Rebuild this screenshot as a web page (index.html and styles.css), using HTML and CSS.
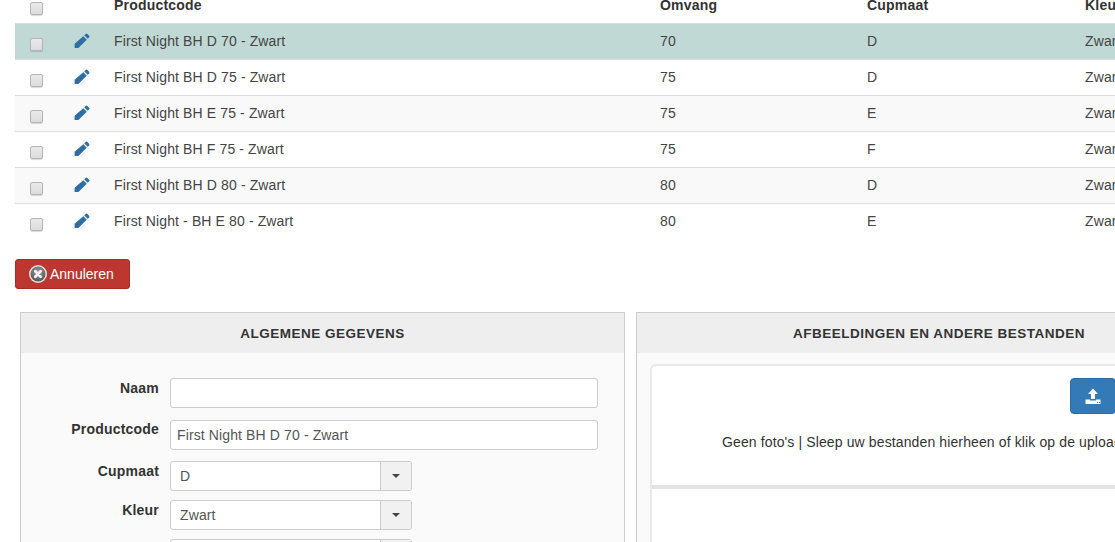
FILE: index.html
```html
<!DOCTYPE html>
<html lang="nl">
<head>
<meta charset="utf-8">
<title>Producten</title>
<link rel="stylesheet" href="styles.css">
</head>
<body>
<svg class="sprite" width="0" height="0" aria-hidden="true">
  <symbol id="pencil" viewBox="0 0 16 16"><path d="M11.6.9a1.2 1.2 0 0 1 1.7 0l1.8 1.8a1.2 1.2 0 0 1 0 1.7l-1.4 1.4-3.5-3.5zM9.3 3.2l3.5 3.5-7.9 7.9c-.2.2-.4.3-.6.3H.6v-3.7c0-.2.1-.4.3-.6z"/></symbol>
</svg>
<div class="page">
  <div class="grid-table">
    <div class="row head">
      <span class="cell-check"><span class="check"></span></span><span></span>
      <span>Productcode</span><span>Omvang</span><span>Cupmaat</span><span>Kleur</span>
    </div>
    <div class="row selected">
      <span class="cell-check"><span class="check"></span></span>
      <span class="cell-edit"><svg class="pencil"><use href="#pencil"/></svg></span>
      <span>First Night BH D 70 - Zwart</span><span>70</span><span>D</span><span>Zwart</span>
    </div>
    <div class="row">
      <span class="cell-check"><span class="check"></span></span>
      <span class="cell-edit"><svg class="pencil"><use href="#pencil"/></svg></span>
      <span>First Night BH D 75 - Zwart</span><span>75</span><span>D</span><span>Zwart</span>
    </div>
    <div class="row odd">
      <span class="cell-check"><span class="check"></span></span>
      <span class="cell-edit"><svg class="pencil"><use href="#pencil"/></svg></span>
      <span>First Night BH E 75 - Zwart</span><span>75</span><span>E</span><span>Zwart</span>
    </div>
    <div class="row">
      <span class="cell-check"><span class="check"></span></span>
      <span class="cell-edit"><svg class="pencil"><use href="#pencil"/></svg></span>
      <span>First Night BH F 75 - Zwart</span><span>75</span><span>F</span><span>Zwart</span>
    </div>
    <div class="row odd">
      <span class="cell-check"><span class="check"></span></span>
      <span class="cell-edit"><svg class="pencil"><use href="#pencil"/></svg></span>
      <span>First Night BH D 80 - Zwart</span><span>80</span><span>D</span><span>Zwart</span>
    </div>
    <div class="row">
      <span class="cell-check"><span class="check"></span></span>
      <span class="cell-edit"><svg class="pencil"><use href="#pencil"/></svg></span>
      <span>First Night - BH E 80 - Zwart</span><span>80</span><span>E</span><span>Zwart</span>
    </div>
  </div>

  <button class="btn-cancel" type="button">
    <svg class="cancel-icon" viewBox="0 0 18 18"><defs><radialGradient id="cg" cx="50%" cy="35%" r="65%"><stop offset="0" stop-color="#9a9a9a"/><stop offset="1" stop-color="#555"/></radialGradient></defs><circle cx="9" cy="9" r="9" fill="#e4e4e4"/><circle cx="9" cy="9" r="7.500" fill="url(#cg)"/><path d="M6.300 6.300l5.400 5.400M11.700 6.300l-5.400 5.400" stroke="#f2f2f2" stroke-width="2.800" stroke-linecap="round"/></svg>
    Annuleren
  </button>

  <div class="panels">
    <section class="panel panel-left">
      <h2 class="panel-title">ALGEMENE GEGEVENS</h2>
      <div class="form">
        <div class="field"><label>Naam</label><div class="input"></div></div>
        <div class="field field-raised"><label>Productcode</label><div class="input filled">First Night BH D 70 - Zwart</div></div>
        <div class="field"><label>Cupmaat</label><div class="select"><span class="select-value">D</span><span class="select-arrow"><i></i></span></div></div>
        <div class="field"><label>Kleur</label><div class="select"><span class="select-value">Zwart</span><span class="select-arrow"><i></i></span></div></div>
        <div class="field"><label></label><div class="select"><span class="select-value"></span><span class="select-arrow"><i></i></span></div></div>
      </div>
    </section>
    <section class="panel panel-right">
      <h2 class="panel-title">AFBEELDINGEN EN ANDERE BESTANDEN</h2>
      <div class="upload-card">
        <div class="upload-top">
          <button class="btn-upload" type="button">
            <svg viewBox="0 0 16 16" width="16" height="16"><path fill="#fff" d="M8 .5l5 5.500H10v5H6V6H3zM.5 11.500H5v1h6v-1h4.500V16H.5z"/><path fill="#337ab7" d="M12 14h1v1h-1zM14 14h1v1h-1z"/></svg>
          </button>
          <p class="upload-text">Geen foto's | Sleep uw bestanden hierheen of klik op de upload knop</p>
        </div>
        <div class="upload-list"></div>
      </div>
    </section>
  </div>
</div>
</body>
</html>
```

FILE: styles.css
```css
* { box-sizing: border-box; }
html, body { margin: 0; height: 100%; overflow: hidden; background: #fff; }
body { font: 14px/20px "Liberation Sans", Arial, sans-serif; color: #333; letter-spacing: .12px; }
.sprite { position: absolute; }
.page { width: 1400px; padding-left: 15px; }

.row {
  display: grid;
  grid-template-columns: 42px 57px 546px 207px 218px 1fr;
  height: 36px;
  align-items: center;
  border-top: 1px solid #ddd;
  padding-top: 1px;
  color: #444;
}
.row > span:nth-child(n+3) { padding-bottom: 3px; }
.row.head {
  height: 23px;
  border-top: 0;
  padding-top: 0;
  font-weight: 700;
  line-height: 10px;
  color: #333;
  letter-spacing: .2px;
  align-items: start;
}
.row.head > span { padding-bottom: 0; }
.row.head > .cell-check { padding-top: 2px; }
.row.selected { background: #c1d9d5; }
.row.odd { background: #f9f9f9; }
.cell-check { display: flex; justify-content: flex-end; padding-top: 5px; }
.check {
  width: 13px; height: 13px;
  margin-right: 14px;
  background: linear-gradient(#e9e9e9, #dcdcdc);
  border: 1px solid #b5b5b5;
  border-radius: 2px;
  box-shadow: 0 1px 1px rgba(0,0,0,.15);
}
.cell-edit { display: flex; padding-left: 17px; padding-bottom: 2px; }
.pencil { width: 16px; height: 16px; fill: #2f6ea5; }

.btn-cancel {
  display: flex; align-items: center; gap: 3px;
  width: 115px; height: 30px;
  margin: 20px 0 23px;
  padding: 0 0 0 13px;
  font: 14px "Liberation Sans", Arial, sans-serif;
  color: #fff;
  background: #bd362f;
  border: 1px solid #a52d27;
  border-radius: 3px;
}
.cancel-icon { width: 18px; height: 18px; }

.panels { display: flex; gap: 11px; margin-left: 5px; }
.panel { border: 1px solid #ccc; border-bottom: 0; background: #fafafa; height: 300px; }
.panel-left { width: 605px; }
.panel-right { width: 600px; }
.panel-title {
  margin: 0; height: 40px;
  background: #eee;
  font: 700 13.5px/41px "Liberation Sans", Arial, sans-serif;
  letter-spacing: .5px;
  text-align: center;
  color: #333;
}
.panel-right .panel-title { text-align: left; padding-left: 156px; }

.form { display: flex; flex-direction: column; padding-top: 25px; }
.field { display: grid; grid-template-columns: 149px 1fr; align-items: start; }
.field label { text-align: right; padding-right: 11px; font-weight: 700; letter-spacing: .2px; }
.field-raised label { margin-top: -1px; }
.input {
  width: 428px; height: 30px;
  margin-bottom: 11px;
  padding: 0 6px;
  background: #fff;
  border: 1px solid #ccc;
  border-radius: 3px;
  line-height: 29px;
  color: #555;
}
.field:first-child .input { margin-bottom: 12px; }
.select {
  display: flex;
  width: 242px; height: 30px;
  margin-bottom: 9px;
  background: #fff;
  border: 1px solid #ccc;
  border-radius: 3px;
  color: #555;
}
.select-value { flex: 1; padding-left: 9px; line-height: 28px; }
.select-arrow {
  width: 31px;
  display: flex; align-items: center; justify-content: center;
  background: #f1f1f1;
  border-left: 1px solid #ccc;
  border-radius: 0 2px 2px 0;
}
.select-arrow i {
  width: 0; height: 0;
  border: 4px solid transparent;
  border-top-color: #444;
  border-bottom: 0;
}

.upload-card {
  margin: 11px 0 0 13px;
  height: 300px;
  background: #fff;
  border: 2px solid #e8e8e8;
  border-right: 0;
  border-bottom: 0;
  border-radius: 6px 0 0 0;
}
.upload-top { height: 123px; padding-top: 12px; border-bottom: 4px solid #e3e3e3; }
.btn-upload {
  display: flex; align-items: center; justify-content: center;
  width: 46px; height: 36px;
  margin: 0 0 0 418px;
  padding: 0;
  background: #337ab7;
  border: 1px solid #2e6da4;
  border-radius: 4px;
}
.upload-text { margin: 18px 0 0 70px; white-space: nowrap; color: #333; }
```
